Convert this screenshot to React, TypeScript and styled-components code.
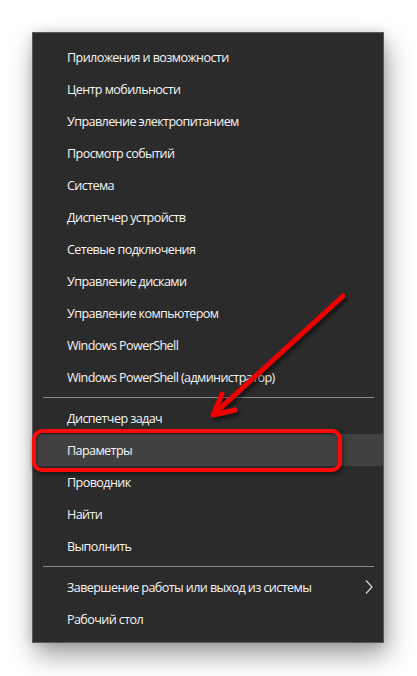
import React from 'react'
import styled, { createGlobalStyle } from 'styled-components'

const GlobalStyle = createGlobalStyle`
  html, body {
    margin: 0;
    padding: 0;
    background: #ffffff;
  }
`

const Page = styled.div`
  position: relative;
  width: 417px;
  height: 676px;
  padding: 32px 0 0 32px;
  box-sizing: border-box;
  overflow: hidden;
`

const Menu = styled.div`
  position: relative;
  width: 352px;
  box-sizing: border-box;
  background: #2b2b2b;
  border: 1px solid #5a5a5a;
  padding: 8px 0 7px;
  display: flex;
  flex-direction: column;
  box-shadow: 3px 12px 24px rgba(0, 0, 0, 0.38), 0 0 10px rgba(0, 0, 0, 0.12);
  font-family: 'Open Sans', 'Noto Sans', sans-serif;
`

const Item = styled.div<{ $active?: boolean }>`
  height: 32px;
  display: flex;
  align-items: center;
  justify-content: space-between;
  padding: 0 10px 0 34px;
  background: ${({ $active }) => ($active ? '#414141' : 'transparent')};
  color: #f4f4f4;
  font-size: 12.6px;
  font-weight: 500;
  letter-spacing: -0.6px;
  white-space: nowrap;
`

const Separator = styled.div`
  height: 1px;
  margin: 4px 9px 4px 10px;
  background: #8a8a8a;
`

const Highlight = styled.div`
  position: absolute;
  left: -1px;
  top: 396px;
  width: 310px;
  height: 43px;
  box-sizing: border-box;
  border: 4px solid #ff0a0a;
  border-radius: 10px;
  box-shadow: 1px 2px 4px rgba(0, 0, 0, 0.55), inset 1px 1px 3px rgba(0, 0, 0, 0.4);
`

const Overlay = styled.svg`
  position: absolute;
  left: 0;
  top: 0;
  pointer-events: none;
`

const Chevron = () => (
  <svg width="8" height="14" viewBox="0 0 8 14">
    <polyline points="1,0.5 7,7 1,13.5" fill="none" stroke="#d8d8d8" strokeWidth="1.2" />
  </svg>
)

const groups = [
  [
    'Приложения и возможности',
    'Центр мобильности',
    'Управление электропитанием',
    'Просмотр событий',
    'Система',
    'Диспетчер устройств',
    'Сетевые подключения',
    'Управление дисками',
    'Управление компьютером',
    'Windows PowerShell',
    'Windows PowerShell (администратор)',
  ],
  ['Диспетчер задач', 'Параметры', 'Проводник', 'Найти', 'Выполнить'],
  ['Завершение работы или выход из системы', 'Рабочий стол'],
]

export default function App() {
  return (
    <Page>
      <GlobalStyle />
      <Menu>
        {groups.map((group, gi) => (
          <React.Fragment key={gi}>
            {gi > 0 && <Separator />}
            {group.map((label) => (
              <Item key={label} $active={label === 'Параметры'}>
                <span>{label}</span>
                {label.startsWith('Завершение') && <Chevron />}
              </Item>
            ))}
          </React.Fragment>
        ))}
        <Highlight />
      </Menu>
      <Overlay width="417" height="676" viewBox="0 0 417 676">
        <defs>
          <filter id="sh" x="-20%" y="-20%" width="140%" height="140%">
            <feDropShadow dx="2" dy="3" stdDeviation="2" floodColor="#000" floodOpacity="0.6" />
          </filter>
        </defs>
        <g filter="url(#sh)" stroke="#ee0000" strokeWidth="5" strokeLinecap="round" strokeLinejoin="round" fill="none">
          <line x1="343" y1="296" x2="215" y2="413" />
          <polyline points="222,394 213,415 235,410" />
        </g>
      </Overlay>
    </Page>
  )
}
